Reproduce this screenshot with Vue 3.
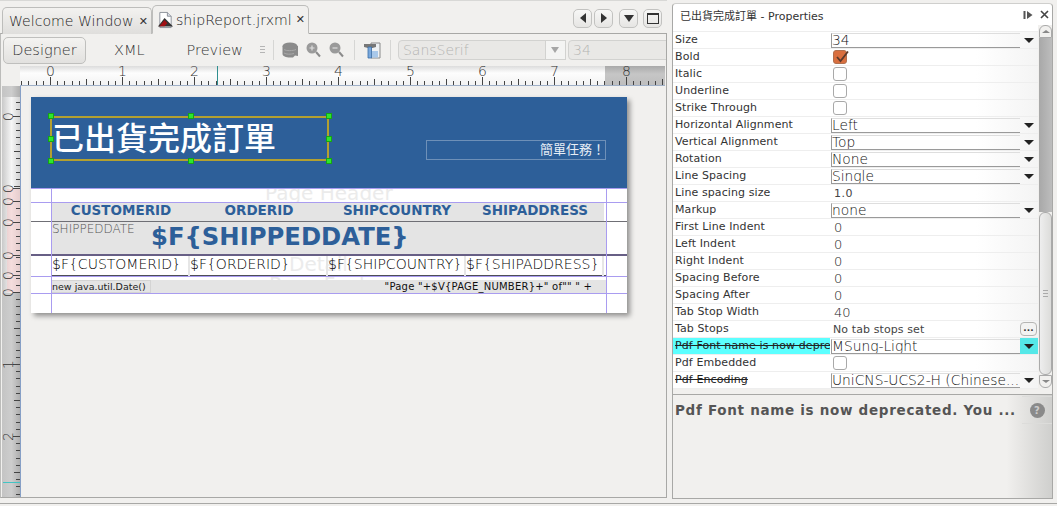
<template>
  <div class="app">
    <section class="editor">
      <div class="tabrow">
        <div class="tab welcome">
          <span class="tab-label">Welcome Window</span>
          <span class="tab-close">✕</span>
        </div>
        <div class="tab active">
          <svg class="file-icon" width="17" height="18" viewBox="0 0 18 18">
            <path d="M3 1h8l4 4v12H3z" fill="#fff" stroke="#8a8f98" />
            <path d="M11 1v4h4" fill="#d8dde6" stroke="#8a8f98" />
            <path d="M1 16 8 7l9 9z" fill="#333" />
            <path d="M2.5 15.500 8 9l3 3.500-3 3z" fill="#a10f14" />
          </svg>
          <span class="tab-label">shipReport.jrxml</span>
          <span class="tab-close">✕</span>
        </div>
        <div class="tab-controls">
          <button class="nav-btn"><i class="tri-left"></i></button>
          <button class="nav-btn"><i class="tri-right"></i></button>
          <button class="nav-btn gap"><i class="tri-down"></i></button>
          <button class="nav-btn"><i class="win-box"></i></button>
        </div>
      </div>

      <div class="editor-body">
        <div class="toolbar">
          <button class="designer">Designer</button>
          <span class="view-btn xml">XML</span>
          <span class="view-btn preview">Preview</span>
          <span class="grip"></span>
          <span class="sep"></span>
          <svg class="tool db" width="17" height="16" viewBox="0 0 17 16">
            <ellipse cx="8" cy="4" rx="7.500" ry="3.500" fill="#8b8b8b" />
            <path d="M.5 4v8c0 2 3.500 3.500 7.500 3.500h3l2-2 3 .5V4z" fill="#8b8b8b" />
            <path d="M2 7.500c2 1.500 9 1.500 12 0M2 11c2 1.500 7 1.500 10 .5" stroke="#a9a9a9" fill="none" />
          </svg>
          <svg class="tool zoom-in" width="15" height="16" viewBox="0 0 15 16">
            <circle cx="6" cy="6" r="5.500" fill="#9a9a9a" />
            <path d="M3.500 6h5M6 3.500v5" stroke="#dedede" stroke-width="1.200" />
            <path d="m10 10 4 4.500" stroke="#8b8b8b" stroke-width="2" />
          </svg>
          <svg class="tool zoom-out" width="15" height="16" viewBox="0 0 15 16">
            <circle cx="6" cy="6" r="5.500" fill="#9a9a9a" />
            <path d="M3.500 6h5" stroke="#dedede" stroke-width="1.200" />
            <path d="m10 10 4 4.500" stroke="#8b8b8b" stroke-width="2" />
          </svg>
          <span class="sep second"></span>
          <svg class="tool hammer" width="17" height="17" viewBox="0 0 17 17">
            <path d="M7 1h9v15H7z" fill="#eef1f4" stroke="#8a8a8a" />
            <path d="M8 9h6v6.500H8z" fill="#a8c8ea" />
            <path d="M0 2h12v3l-3.500 1H4L0 5z" fill="#777" />
            <path d="M4 5h3.500v11H4z" fill="#7aa8dc" stroke="#3b6ea8" stroke-width=".8" />
          </svg>
          <span class="sep third"></span>
          <div class="font-combo">
            <span>SansSerif</span>
            <span class="combo-arrow"><i></i></span>
          </div>
          <div class="size-field">34</div>
        </div>

        <div class="ruler-row">
          <div class="ruler-corner"></div>
          <svg class="h-ruler" width="645" height="20" viewBox="0 0 645 20">
            <defs>
              <linearGradient id="hr" x1="0" y1="0" x2="0" y2="1">
                <stop offset="0" stop-color="#dcdcdc" />
                <stop offset=".35" stop-color="#fdfdfd" />
                <stop offset="1" stop-color="#f2f2f2" />
              </linearGradient>
              <linearGradient id="hg" x1="0" y1="0" x2="0" y2="1">
                <stop offset="0" stop-color="#a9a9a9" />
                <stop offset=".4" stop-color="#c6c6c6" />
                <stop offset="1" stop-color="#bdbdbd" />
              </linearGradient>
            </defs>
            <rect width="585" height="20" fill="url(#hr)" />
            <rect x="585" width="60" height="20" fill="url(#hg)" />
            <line x1="0" x2="645" y1="19.500" y2="19.500" stroke="#9fb0c8" />
            <line v-for="t in hTicks" :key="t.x" :x1="t.x" :x2="t.x" :y1="19 - t.len" y2="19" stroke="#444" />
            <text v-for="n in 9" :key="n" class="ruler-num" :x="hInch(n - 1)" y="10" text-anchor="middle">{{ n - 1 }}</text>
            <line x1="197.500" x2="197.500" y1="0" y2="19" stroke="#2f8f8f" />
          </svg>
        </div>

        <div class="work-row">
          <svg class="v-ruler" width="19" height="411" viewBox="0 0 19 411">
            <defs>
              <linearGradient id="vr" x1="0" y1="0" x2="1" y2="0">
                <stop offset="0" stop-color="#c9c9c9" />
                <stop offset=".5" stop-color="#f6f6f6" />
                <stop offset="1" stop-color="#cfcfcf" />
              </linearGradient>
              <linearGradient id="vg" x1="0" y1="0" x2="1" y2="0">
                <stop offset="0" stop-color="#c4c4c4" />
                <stop offset=".5" stop-color="#cdcdcd" />
                <stop offset="1" stop-color="#ababab" />
              </linearGradient>
            </defs>
            <rect width="19" height="411" fill="url(#vg)" />
            <rect y="11" width="19" height="196" fill="url(#vr)" />
            <rect v-for="b in pinkBands" :key="b.y" :y="b.y" :height="b.h" x="5" width="13" fill="#f4c9c9" opacity=".55" />
            <line x1="18.500" x2="18.500" y1="0" y2="411" stroke="#87a0c6" />
            <line v-for="t in vTicks" :key="t.y" :x1="18 - t.len" x2="18" :y1="t.y" :y2="t.y" stroke="#444" />
            <text
              v-for="m in vNumbers"
              :key="m.y"
              class="ruler-num"
              :x="6"
              :y="m.y"
              text-anchor="middle"
              :transform="`rotate(-90 6 ${m.y + 0.5}) translate(0 5)`"
            >{{ m.label }}</text>
            <line x1="1" x2="18" y1="396.500" y2="396.500" stroke="#43c4c4" />
          </svg>

          <div class="canvas">
            <div class="page">
              <div class="band title-band">
                <div class="title-box">
                  <span class="title-text">已出貨完成訂單</span>
                  <i class="handle h-tl"></i><i class="handle h-tm"></i><i class="handle h-tr"></i>
                  <i class="handle h-ml"></i><i class="handle h-mr"></i>
                  <i class="handle h-bl"></i><i class="handle h-bm"></i><i class="handle h-br"></i>
                </div>
                <div class="subtitle-box">簡單任務！</div>
              </div>

              <div class="band page-header"><span class="watermark">Page Header</span></div>

              <div class="band column-header">
                <span v-for="c in columns" :key="c.head" class="col-head">{{ c.head }}</span>
              </div>

              <div class="band group-header">
                <span class="group-label">SHIPPEDDATE</span>
                <span class="group-value">$F{SHIPPEDDATE}</span>
              </div>

              <div class="band detail">
                <span class="watermark detail-mark">Detail</span>
                <span v-for="c in columns" :key="c.field" class="cell">{{ c.field }}</span>
              </div>

              <div class="band column-footer"></div>

              <div class="band page-footer">
                <span class="watermark footer-mark">Page Footer</span>
                <span class="foot-date">new java.util.Date()</span>
                <span class="foot-page">"Page "+$V{PAGE_NUMBER}+" of"" " +</span>
              </div>

              <div class="band bottom-margin"></div>

              <i class="margin-line left"></i>
              <i class="margin-line right"></i>
            </div>
          </div>
        </div>
      </div>
    </section>

    <aside class="props">
      <header class="props-title">
        <span class="props-name">已出貨完成訂單 - Properties</span>
        <span class="props-icons">
          <svg width="10" height="10" viewBox="0 0 10 10">
            <path d="M.5 1h2v8h-2zM4 1l5.500 4L4 9z" fill="#555" />
          </svg>
          <svg width="9" height="9" viewBox="0 0 9 9">
            <path d="m1 1 7 7M8 1 1 8" stroke="#444" stroke-width="1.600" />
          </svg>
        </span>
      </header>

      <div class="props-main">
        <div class="props-list">
          <div class="clip-row">
            <span class="cut-text">Font name</span>
            <span class="cut-value">SansSerif</span>
          </div>
          <div
            v-for="row in rows"
            :key="row.label"
            class="row"
            :class="{ selected: row.selected }"
          >
            <div class="row-label" :class="{ struck: row.struck }">{{ row.label }}</div>
            <div class="row-value">
              <template v-if="row.type === 'combo'">
                <div class="combo-field">{{ row.value }}</div>
                <span class="combo-drop"><i></i></span>
              </template>
              <span v-else-if="row.type === 'check'" class="check" :class="{ on: row.value }">
                <svg v-if="row.value" width="16" height="14" viewBox="0 0 16 14">
                  <path d="m3 7 3.500 4L14 1.500" stroke="#5a3a2c" stroke-width="1.800" fill="none" />
                </svg>
              </span>
              <span v-else-if="row.type === 'note'" class="note">
                {{ row.value }}
                <button class="dots">...</button>
              </span>
              <span v-else class="plain" :class="{ small: row.small }">{{ row.value }}</span>
            </div>
          </div>
        </div>

        <div class="scrollbar">
          <span class="sb-arrow up"></span>
          <span class="sb-track-top"></span>
          <span class="sb-thumb"><i></i></span>
          <span class="sb-arrow down"></span>
        </div>
      </div>

      <div class="desc">
        <span class="desc-text">Pdf Font name is now deprecated. You ...</span>
        <span class="desc-help"><b>?</b></span>
      </div>
    </aside>

    <footer class="status"></footer>
  </div>
</template>

<script setup>
const columns = [
  { head: "CUSTOMERID", field: "$F{CUSTOMERID}" },
  { head: "ORDERID", field: "$F{ORDERID}" },
  { head: "SHIPCOUNTRY", field: "$F{SHIPCOUNTRY}" },
  { head: "SHIPADDRESS", field: "$F{SHIPADDRESS}" },
];

const rows = [
  { label: "Size", type: "combo", value: "34" },
  { label: "Bold", type: "check", value: true },
  { label: "Italic", type: "check", value: false },
  { label: "Underline", type: "check", value: false },
  { label: "Strike Through", type: "check", value: false },
  { label: "Horizontal Alignment", type: "combo", value: "Left" },
  { label: "Vertical Alignment", type: "combo", value: "Top" },
  { label: "Rotation", type: "combo", value: "None" },
  { label: "Line Spacing", type: "combo", value: "Single" },
  { label: "Line spacing size", type: "text", value: "1.0", small: true },
  { label: "Markup", type: "combo", value: "none" },
  { label: "First Line Indent", type: "text", value: "0" },
  { label: "Left Indent", type: "text", value: "0" },
  { label: "Right Indent", type: "text", value: "0" },
  { label: "Spacing Before", type: "text", value: "0" },
  { label: "Spacing After", type: "text", value: "0" },
  { label: "Tab Stop Width", type: "text", value: "40" },
  { label: "Tab Stops", type: "note", value: "No tab stops set" },
  { label: "Pdf Font name is now deprecated", type: "combo", value: "MSung-Light", struck: true, selected: true },
  { label: "Pdf Embedded", type: "check", value: false },
  { label: "Pdf Encoding", type: "combo", value: "UniCNS-UCS2-H (Chinese...", struck: true },
];

const hInch = (n) => 30.5 + n * 72;

const hTicks = [];
for (let i = -4; i <= 85; i++) {
  const x = Math.round(30 + i * 7.2) + 0.5;
  const len = i % 10 === 0 ? 8 : i % 5 === 0 ? 6 : 4;
  hTicks.push({ x, len });
}

// bands restart the vertical scale at their own zero
const vStarts = [30, 102, 115, 136, 169, 189, 206];
const vNumbers = [
  ...vStarts.map((y) => ({ y, label: "0" })),
  { y: 278, label: "1" },
  { y: 350, label: "2" },
];

const pinkBands = [
  { y: 103, h: 12 },
  { y: 116, h: 20 },
  { y: 137, h: 32 },
  { y: 170, h: 19 },
  { y: 190, h: 16 },
];

const vTicks = [];
const seen = new Set();
const addTick = (y, len) => {
  if (seen.has(y)) return;
  seen.add(y);
  vTicks.push({ y: y + 0.5, len });
};
vStarts.forEach((y) => addTick(y, 7));
addTick(278, 7);
addTick(350, 7);
for (let i = -2; i < 11; i++) addTick(30 + i * 7, i % 5 === 0 ? 6 : 4);
for (let y = 122; y < 206; y += 7) addTick(y, 4);
for (let i = 1; i < 29; i++) addTick(Math.round(206 + i * 7.2), i % 5 === 0 ? 6 : 4);
</script>

<style scoped>
.app {
  position: relative;
  display: grid;
  grid-template-columns: 667px 390px;
  grid-template-rows: 499px 7px;
  width: 1057px;
  height: 506px;
  overflow: hidden;
  background: #f1f0ee;
  font-family: "DejaVu Sans", sans-serif;
  color: #333;
}

.editor {
  display: flex;
  flex-direction: column;
  min-width: 0;
  margin-bottom: 1px;
  padding-top: 4px;
  border-top: 1px solid #d8d8d6;
}

.tabrow {
  position: relative;
  z-index: 1;
  display: flex;
  align-items: flex-end;
  height: 29px;
  flex: none;
  padding-left: 2px;
  margin-bottom: -1px;
}

.tab {
  display: flex;
  align-items: center;
  box-sizing: border-box;
  flex: none;
  border: 1px solid #bdbdbb;
  border-bottom: none;
  border-radius: 5px 5px 0 0;
}

.welcome {
  width: 150px;
  height: 27px;
  padding-left: 6px;
  background: linear-gradient(#f3f2f0, #dfdedc);
}

.active {
  width: 157px;
  height: 29px;
  padding-left: 4px;
  background: #f1f0ee;
  border-bottom: 1px solid #f1f0ee;
}

.file-icon {
  flex: none;
  margin-right: 2px;
}

.tab-label {
  font-size: 14.100px;
  font-weight: 200;
  color: #222;
  white-space: nowrap;
}

.tab-close {
  margin-left: auto;
  margin-right: 3px;
  font-size: 11px;
  font-weight: 700;
  color: #333;
}

.tab-controls {
  display: flex;
  align-items: center;
  gap: 2px;
  margin-left: auto;
  margin-right: 5px;
  height: 26px;
  padding-bottom: 3px;
}

.nav-btn {
  display: flex;
  align-items: center;
  justify-content: center;
  width: 19px;
  height: 19px;
  padding: 0;
  border: 1px solid #c2c2c0;
  border-radius: 5px;
  background: linear-gradient(#f7f7f6, #e6e5e3);
}

.nav-btn.gap {
  margin-left: 4px;
  margin-right: 3px;
}

.tri-left {
  border: 5px solid transparent;
  border-left: none;
  border-right: 6px solid #333;
}

.tri-right {
  border: 5px solid transparent;
  border-right: none;
  border-left: 6px solid #333;
}

.tri-down {
  border: 5px solid transparent;
  border-bottom: none;
  border-top: 7px solid #333;
}

.win-box {
  width: 10px;
  height: 8px;
  border: 1px solid #333;
  border-top-width: 2px;
}

.editor-body {
  display: flex;
  flex-direction: column;
  flex: 1;
  min-height: 0;
  border: 1px solid #a8a8a6;
  border-left-color: #bcbcba;
}

.toolbar {
  display: flex;
  align-items: center;
  height: 32px;
  flex: none;
  padding: 0 0 0 2px;
  font-weight: 200;
  overflow: hidden;
}

.toolbar > * {
  flex: none;
}

.designer {
  width: 83px;
  height: 27px;
  padding: 0;
  border: 1px solid #bfbfbd;
  border-radius: 5px;
  background: linear-gradient(#f4f3f1, #e2e1df);
  font: 200 14.500px "DejaVu Sans", sans-serif;
  color: #333;
}

.view-btn {
  font-size: 14.500px;
  color: #333;
}

.xml {
  margin-left: 28px;
}

.preview {
  margin-left: 42px;
}

.grip {
  width: 5px;
  height: 8px;
  margin-left: 17px;
  background: repeating-linear-gradient(#b5b5b5 0 1px, transparent 1px 3px);
}

.sep {
  width: 1px;
  height: 20px;
  margin-left: 8px;
  background: #d6d6d4;
}

.db {
  margin-left: 8px;
}

.zoom-in {
  margin-left: 7px;
}

.zoom-out {
  margin-left: 8px;
}

.sep.second {
  margin-left: 10px;
}

.hammer {
  margin-left: 9px;
}

.sep.third {
  margin-left: 9px;
}

.font-combo {
  display: flex;
  align-items: center;
  justify-content: space-between;
  width: 168px;
  height: 20px;
  margin-left: 7px;
  padding-left: 4px;
  box-sizing: border-box;
  border: 1px solid #d2d2d0;
  border-radius: 4px;
  background: #e9e8e6;
  font-size: 14px;
  color: #b5b5b3;
}

.combo-arrow {
  display: flex;
  align-items: center;
  justify-content: center;
  width: 21px;
  height: 20px;
  margin-right: -1px;
  background: #f4f4f3;
  border: 1px solid #d2d2d0;
  box-sizing: border-box;
}

.combo-arrow i {
  border: 4px solid transparent;
  border-bottom: none;
  border-top: 6px solid #a6a6a6;
}

.size-field {
  width: 110px;
  height: 20px;
  margin-left: 2px;
  padding-left: 4px;
  box-sizing: border-box;
  border: 1px solid #d2d2d0;
  border-radius: 4px;
  background: #e9e8e6;
  font-size: 14px;
  line-height: 18px;
  color: #b5b5b3;
}

.ruler-row {
  display: flex;
  flex: none;
  height: 20px;
}

.ruler-corner {
  width: 19px;
  flex: none;
}

.h-ruler,
.v-ruler {
  display: block;
  flex: none;
}

.ruler-num {
  font-size: 14px;
  font-weight: 200;
  fill: #333;
  font-family: "DejaVu Sans", sans-serif;
}

.work-row {
  display: flex;
  flex: 1;
  min-height: 0;
  overflow: hidden;
  padding-left: 1px;
}

.canvas {
  flex: 1;
  padding: 11px 0 0 10px;
}

.page {
  position: relative;
  display: flex;
  flex-direction: column;
  width: 596px;
  height: 216px;
  background: #fff;
  box-shadow: 3px 3px 5px rgba(0, 0, 0, 0.4);
}

.band {
  position: relative;
  flex: none;
  box-sizing: border-box;
  overflow: hidden;
}

.title-band {
  height: 92px;
  background: #2d5f99;
  border-bottom: 1px solid #a99cf0;
  overflow: visible;
}

.title-box {
  position: absolute;
  left: 19px;
  top: 19px;
  width: 279px;
  height: 45px;
  box-sizing: border-box;
  border: 2px solid #b3a030;
}

.title-text {
  display: block;
  padding-top: 1px;
  font-family: "Liberation Sans", "Noto Sans CJK TC", sans-serif;
  font-size: 32px;
  line-height: 41px;
  font-weight: 500;
  color: #fff;
}

.handle {
  position: absolute;
  width: 4px;
  height: 4px;
  background: #2ee62e;
  border: 1px solid #16a316;
}

.h-tl, .h-tm, .h-tr { top: -5px; }
.h-ml, .h-mr { top: 18px; }
.h-bl, .h-bm, .h-br { bottom: -5px; }
.h-tl, .h-ml, .h-bl { left: -4px; }
.h-tm, .h-bm { left: 136px; }
.h-tr, .h-mr, .h-br { right: -5px; }

.subtitle-box {
  position: absolute;
  left: 395px;
  top: 43px;
  width: 180px;
  height: 20px;
  box-sizing: border-box;
  border: 1px solid #6e90b8;
  font-family: "Liberation Sans", "Noto Sans CJK TC", sans-serif;
  font-size: 13px;
  line-height: 18px;
  text-align: right;
  color: #e8eef6;
}

.watermark {
  position: absolute;
  font-family: "DejaVu Sans", sans-serif;
  font-size: 20px;
  line-height: 20px;
  color: #ebebeb;
  white-space: nowrap;
}

.page-header {
  height: 14px;
  border-bottom: 1px solid #a99cf0;
}

.page-header .watermark {
  left: 234px;
  top: -6px;
}

.column-header {
  display: grid;
  grid-template-columns: repeat(4, 138px);
  height: 19px;
  padding-left: 21px;
  border-bottom: 1px solid #6f6f75;
  background: linear-gradient(#e4e4e4, #e4e4e4) 21px 0 / 552px 100% no-repeat;
}

.col-head {
  font-size: 13.500px;
  font-weight: 700;
  font-family: "DejaVu Sans", sans-serif;
  line-height: 14px;
  text-align: center;
  color: #2d5f99;
  white-space: nowrap;
}

.group-header {
  height: 34px;
  border-bottom: 2px solid #675f85;
  background: linear-gradient(#e4e4e4, #e4e4e4) 21px 0 / 555px 100% no-repeat;
}

.group-label {
  position: absolute;
  left: 21px;
  top: 0;
  font-size: 12px;
  font-weight: 200;
  line-height: 14px;
  color: #555;
}

.group-value {
  position: absolute;
  left: 120px;
  top: 1px;
  font-size: 24.300px;
  font-weight: 700;
  line-height: 28px;
  color: #2d5f99;
  white-space: nowrap;
}

.detail {
  display: grid;
  grid-template-columns: repeat(4, 138px);
  height: 20px;
  padding-left: 21px;
  background: linear-gradient(#4e4e56, #4e4e56) 21px 100% / 555px 1px no-repeat;
}

.detail-mark {
  left: 258px;
  top: -2px;
}

.cell {
  position: relative;
  padding-right: 2px;
  border-right: 2px solid #e6e6e6;
  font-size: 14px;
  font-weight: 200;
  line-height: 16px;
  color: #000;
  white-space: nowrap;
}

.column-footer {
  height: 1px;
  background: #a99cf0;
}

.page-footer {
  height: 17px;
  border-bottom: 1px solid #a99cf0;
  background: linear-gradient(#e4e4e4, #e4e4e4) 21px 3px / 555px 14px no-repeat;
}

.footer-mark {
  left: 238px;
  top: 0;
  height: 3px;
  overflow: hidden;
  line-height: 14px;
}

.foot-date {
  position: absolute;
  left: 21px;
  top: 3px;
  width: 99px;
  height: 13px;
  box-sizing: border-box;
  border: 1px solid #d4d4d4;
  border-left: none;
  font-size: 9.500px;
  line-height: 11px;
  color: #222;
  white-space: nowrap;
}

.foot-page {
  position: absolute;
  right: 35px;
  top: 3px;
  font-size: 10px;
  letter-spacing: 0.22px;
  line-height: 13px;
  color: #111;
  white-space: nowrap;
}

.bottom-margin {
  flex: 1;
}

.margin-line {
  position: absolute;
  top: 92px;
  bottom: 0;
  width: 1px;
  background: #a99cf0;
}

.margin-line.left {
  left: 20px;
}

.margin-line.right {
  left: 575px;
}

.props {
  display: flex;
  flex-direction: column;
  margin: 3px 4px 0 5px;
  min-height: 0;
  border: 1px solid #a8a8a6;
  border-top-color: #cfcfcd;
  border-radius: 4px 4px 0 0;
  background: #f1f0ee;
  position: relative;
}

.props-title {
  display: flex;
  align-items: center;
  justify-content: space-between;
  height: 21px;
  flex: none;
  padding: 0 2px 0 7px;
  background: #fff;
  border-radius: 4px 4px 0 0;
}

.props-name {
  font-family: "DejaVu Sans", "Noto Sans CJK TC", sans-serif;
  font-size: 11px;
  color: #333;
}

.props-icons {
  display: flex;
  align-items: center;
  gap: 7px;
  padding-right: 1px;
}

.props-main {
  display: flex;
  height: 369px;
  flex: none;
  background: #f1f0ee;
  border-bottom: 1px solid #a8a8a6;
}

.props-list {
  width: 365px;
  flex: none;
  overflow: hidden;
}

.clip-row {
  position: relative;
  height: 6px;
  overflow: hidden;
  border-bottom: 1px solid #eee;
  background: #fff;
  font-size: 11px;
}

.cut-text {
  position: absolute;
  left: 3px;
  top: -10px;
}

.cut-value {
  position: absolute;
  left: 159px;
  top: -10px;
  color: #777;
}

.row {
  display: grid;
  grid-template-columns: 157px 1fr;
  height: 17px;
  box-sizing: border-box;
  border-bottom: 1px solid #eee;
  background: #fff;
}

.row-label {
  overflow: hidden;
  padding-left: 2px;
  font-size: 11px;
  line-height: 16px;
  letter-spacing: 0.1px;
  color: #333;
  white-space: nowrap;
}

.row-label.struck {
  text-decoration: line-through;
  color: #222;
}

.row.selected .row-label {
  background: #5cffff;
}

.row-value {
  position: relative;
  display: flex;
  align-items: center;
  min-width: 0;
  padding-left: 1px;
  background: linear-gradient(90deg, #fff 70%, #f4f4f4);
}

.combo-field {
  flex: 1;
  height: 15px;
  box-sizing: border-box;
  margin-right: 18px;
  border-top: 1px solid #dedede;
  border-bottom: 1px solid #9a9a9a;
  border-left: 1px solid #9a9a9a;
  font-size: 13.800px;
  font-weight: 200;
  line-height: 12px;
  color: #111;
  white-space: nowrap;
  overflow: hidden;
}

.combo-drop {
  position: absolute;
  right: 0;
  top: 0;
  bottom: 0;
  display: flex;
  align-items: center;
  justify-content: center;
  width: 18px;
}

.row.selected .combo-drop {
  background: #55e8e8;
}

.combo-drop i {
  border: 5px solid transparent;
  border-bottom: none;
  border-top: 5px solid #222;
}

.check {
  display: block;
  width: 12px;
  height: 12px;
  margin-left: 2px;
  border: 1px solid #a9a9a9;
  border-radius: 3px;
  background: #fff;
}

.check.on {
  background: #d96f3f;
  border-color: #b0704f;
}

.check svg {
  display: block;
  margin-top: -1px;
}

.plain {
  margin-left: 3px;
  font-size: 13px;
  font-weight: 200;
  color: #222;
}

.plain.small {
  font-size: 11px;
  font-weight: 400;
  letter-spacing: 0.5px;
  color: #444;
}

.note {
  display: flex;
  align-items: center;
  justify-content: space-between;
  flex: 1;
  margin-left: 2px;
  font-size: 11px;
  letter-spacing: 0.1px;
  color: #444;
}

.dots {
  width: 17px;
  height: 14px;
  margin-right: 1px;
  padding: 0 0 3px;
  border: 1px solid #b5b5b3;
  border-radius: 4px;
  background: #f3f3f2;
  font: 700 9px/8px "DejaVu Sans", sans-serif;
  color: #333;
}

.scrollbar {
  display: flex;
  flex-direction: column;
  width: 13px;
  margin: 0 0 6px 1px;
  box-sizing: border-box;
}

.sb-arrow {
  flex: none;
  position: relative;
  height: 13px;
  border: 1px solid #aaa;
  background: #f1f0ee;
  box-sizing: border-box;
}

.sb-arrow.up {
  border-radius: 6px 6px 0 0;
}

.sb-arrow.down {
  border-radius: 0 0 6px 6px;
}

.sb-arrow::after {
  content: "";
  position: absolute;
  left: 2px;
  top: 4px;
  border: 4px solid transparent;
  border-top: none;
  border-bottom: 3px solid #888;
}

.sb-arrow.down::after {
  border: 4px solid transparent;
  border-bottom: none;
  border-top: 3px solid #888;
}

.sb-track-top {
  flex: 1;
  background: linear-gradient(90deg, #a8a8a8, #bdbdbd);
}

.sb-thumb {
  flex: none;
  display: flex;
  align-items: center;
  justify-content: center;
  height: 163px;
  box-sizing: border-box;
  border: 1px solid #aaa;
  border-radius: 6px;
  background: linear-gradient(90deg, #eee, #dcdcda);
}

.sb-thumb i {
  width: 5px;
  height: 7px;
  background: repeating-linear-gradient(#aaa 0 1px, transparent 1px 3px);
}

.desc {
  position: relative;
  flex: 1;
  display: flex;
  align-items: flex-start;
  justify-content: space-between;
  padding: 6px 0 0 2px;
  background: linear-gradient(90deg, #f1f0ee 88%, #cfcfcd);
}

.desc-text {
  font-size: 13.500px;
  font-weight: 700;
  line-height: 18px;
  letter-spacing: 0.7px;
  color: #555;
  white-space: nowrap;
}

.desc-help {
  display: flex;
  align-items: center;
  justify-content: center;
  box-sizing: border-box;
  flex: none;
  position: absolute;
  right: 0;
  top: 1px;
  width: 30px;
  height: 28px;
  border-top: 1px solid #dcdcda;
  border-bottom: 1px solid #dcdcda;
  font-size: 10px;
  color: #ccc;
}

.desc-help b {
  display: block;
  width: 15px;
  height: 15px;
  border-radius: 50%;
  background: #8a8a8a;
  line-height: 15px;
  text-align: center;
}

.status {
  grid-column: 1 / 3;
  border-top: 1px solid #a8a8a6;
  margin-top: 4px;
}
</style>

<style>
html,
body {
  margin: 0;
  background: #f1f0ee;
}
</style>
